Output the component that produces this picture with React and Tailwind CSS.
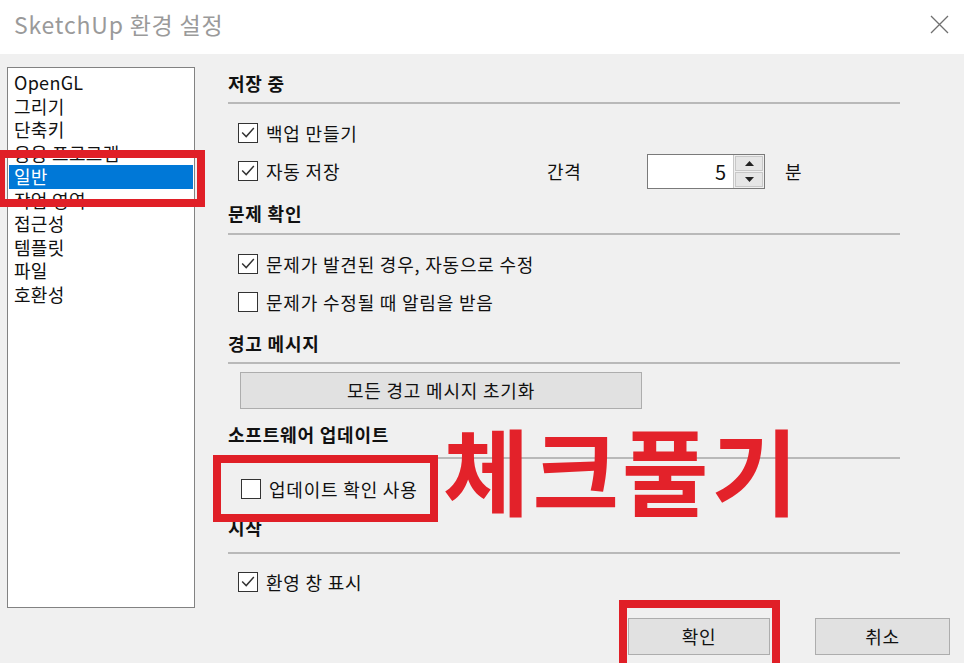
import React from 'react';

const menuItems = ['OpenGL', '그리기', '단축키', '응용 프로그램', '일반', '작업 영역', '접근성', '템플릿', '파일', '호환성'];

const Checkbox = ({ checked }) => (
    <span className="flex h-[20px] w-[20px] shrink-0 items-center justify-center border-[1.5px] border-[#333] bg-white">
        {checked && (
            <svg viewBox="0 0 20 20" className="h-[18px] w-[18px]">
                <path d="M3.5 9.5 L8 14 L16.5 4.5" fill="none" stroke="#333" strokeWidth="1.6" />
            </svg>
        )}
    </span>
);

const CheckRow = ({ checked, label, className = '' }) => (
    <div className={`flex h-[38px] items-center gap-[8px] pl-[10px] ${className}`}>
        <Checkbox checked={checked} />
        <span>{label}</span>
    </div>
);

const Header = ({ children, className = '' }) => (
    <div className={`flex h-[32px] items-center font-bold ${className}`}>{children}</div>
);

const Rule = ({ className = '' }) => <div className={`h-[2px] w-[672px] bg-[#b9b9b9] ${className}`} />;

const Spinner = () => (
    <div className="flex h-[35px] w-[118px] border border-[#7a7a7a] bg-white">
        <div className="flex-1 pr-[6px] text-right text-[20px] leading-[33px]">5</div>
        <div className="flex w-[31px] flex-col gap-[1px] border-l border-[#c8c8c8] bg-[#f0f0f0] p-[1px]">
            <div className="flex flex-1 items-center justify-center border border-[#c8c8c8] bg-[#e6e6e6]">
                <svg width="9" height="5" viewBox="0 0 9 5"><path d="M0 5 L4.5 0 L9 5 Z" fill="#222" /></svg>
            </div>
            <div className="flex flex-1 items-center justify-center border border-[#c8c8c8] bg-[#e6e6e6]">
                <svg width="9" height="5" viewBox="0 0 9 5"><path d="M0 0 L4.5 5 L9 0 Z" fill="#222" /></svg>
            </div>
        </div>
    </div>
);

const App = () => {
    return (
        <div className="relative h-[663px] w-[964px] overflow-hidden bg-[#f0f0f0] font-['Noto_Sans_CJK_KR',sans-serif] text-[18px] tracking-[0.8px] text-[#111]">
            {/* title bar */}
            <div className="flex h-[54px] items-center justify-between bg-white pb-[6px] pl-[14px] pr-[15px]">
                <span className="text-[23px] text-[#9a9a9a]">SketchUp 환경 설정</span>
                <svg width="19" height="19" viewBox="0 0 19 19">
                    <path d="M1 1 L18 18 M18 1 L1 18" stroke="#707070" strokeWidth="1.3" />
                </svg>
            </div>

            <div className="flex items-start pt-[13px]">
                {/* category list */}
                <div className="ml-[7px] h-[541px] w-[188px] border border-[#828282] bg-white px-[1px] pt-[3px] tracking-[0.3px]">
                    {menuItems.map(item => (
                        <div
                            key={item}
                            className={`h-[23.5px] pl-[5px] leading-[23.5px] ${item === '일반' ? 'bg-[#0078d7] text-white' : ''}`}
                        >
                            {item}
                        </div>
                    ))}
                </div>

                {/* settings */}
                <div className="ml-[33px] flex flex-col">
                    <Header>저장 중</Header>
                    <Rule className="mt-[3px]" />
                    <div className="mt-[10px]">
                        <CheckRow checked label="백업 만들기" />
                        <div className="flex h-[38px] items-center">
                            <div className="flex w-[319px] items-center gap-[8px] pl-[10px]">
                                <Checkbox checked />
                                <span>자동 저장</span>
                            </div>
                            <span className="w-[100px]">간격</span>
                            <Spinner />
                            <span className="ml-[20px]">분</span>
                        </div>
                    </div>

                    <Header className="mt-[7px]">문제 확인</Header>
                    <Rule className="mt-[4px]" />
                    <div className="mt-[10px]">
                        <CheckRow checked label="문제가 발견된 경우, 자동으로 수정" />
                        <CheckRow label="문제가 수정될 때 알림을 받음" />
                    </div>

                    <Header className="mt-[6px]">경고 메시지</Header>
                    <Rule className="mt-[3px]" />
                    <button className="ml-[12px] mt-[8px] h-[37px] w-[402px] border border-[#adadad] bg-[#e1e1e1] tracking-[0.8px]">
                        모든 경고 메시지 초기화
                    </button>

                    <Header className="mt-[9px]">소프트웨어 업데이트</Header>
                    <Rule className="mt-[7px]" />
                    <CheckRow label="업데이트 확인 사용" className="mt-[11px] pl-[13px]" />

                    <Header className="mt-[3px]">시작</Header>
                    <Rule className="mt-[9px]" />
                    <CheckRow checked label="환영 창 표시" className="mt-[9px]" />
                </div>
            </div>

            {/* footer buttons */}
            <div className="mt-[10px] flex justify-end gap-[45px] pr-[14px]">
                <button className="h-[37px] w-[142px] border border-[#adadad] bg-[#e1e1e1] tracking-[0.8px]">확인</button>
                <button className="h-[37px] w-[135px] border border-[#adadad] bg-[#e1e1e1] tracking-[0.8px]">취소</button>
            </div>

            {/* annotations */}
            <div className="absolute left-[-3px] top-[150px] h-[57px] w-[208px] border-[8px] border-[#e01f27]" />
            <div className="absolute left-[213px] top-[455px] h-[67px] w-[225px] border-[8px] border-[#e01f27]" />
            <div className="absolute left-[619px] top-[600px] h-[72px] w-[161px] border-[8px] border-[#e01f27]" />
            <div className="absolute left-[443px] top-[421px] text-[94px] font-bold leading-none tracking-[3px] text-[#e3222a]">
                체크풀기
            </div>
        </div>
    );
};

export default App;
